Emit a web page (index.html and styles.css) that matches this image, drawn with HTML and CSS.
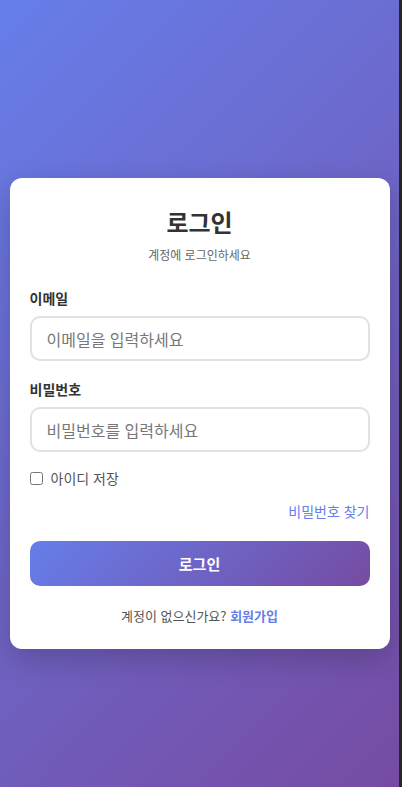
FILE: index.html
```html
<!DOCTYPE html>
<html lang="ko">
<head>
    <meta charset="UTF-8">
    <meta name="viewport" content="width=device-width, initial-scale=1.0">
    <title>로그인</title>
    <link rel="stylesheet" href="styles.css">
</head>
<body>
    <div class="page">
        <div class="login-card">
            <h1 class="login-title">로그인</h1>
            <p class="login-subtitle">계정에 로그인하세요</p>

            <form class="login-form">
                <div class="form-group">
                    <label for="email">이메일</label>
                    <input type="email" id="email" placeholder="이메일을 입력하세요">
                </div>
                <div class="form-group">
                    <label for="password">비밀번호</label>
                    <input type="password" id="password" placeholder="비밀번호를 입력하세요">
                </div>

                <label class="remember">
                    <input type="checkbox" id="remember">
                    <span>아이디 저장</span>
                </label>

                <div class="forgot">
                    <a href="#">비밀번호 찾기</a>
                </div>

                <button type="submit" class="login-btn">로그인</button>
            </form>

            <p class="signup">계정이 없으신가요? <a href="#">회원가입</a></p>
        </div>
    </div>
</body>
</html>
```

FILE: styles.css
```css
* {
    box-sizing: border-box;
}

html {
    background-color: #25262d;
}

body {
    margin: 0;
    font-family: "Noto Sans CJK KR", "Noto Sans", sans-serif;
    color: #333;
}

.page {
    width: calc(100% - 3px);
    height: 100vh;
    padding: 40px 0 0;
    display: flex;
    align-items: center;
    justify-content: center;
    background: linear-gradient(135deg, #667eea 0%, #764ba2 100%);
}

.login-card {
    width: 380px;
    background-color: #fff;
    border-radius: 12px;
    padding: 28px 20px 23px;
    box-shadow: 0 10px 30px rgba(0, 0, 0, 0.2);
}

.login-title {
    margin: 0;
    text-align: center;
    font-size: 24px;
    line-height: 32px;
    font-weight: 700;
    color: #333;
}

.login-subtitle {
    margin: 8px 0 0;
    text-align: center;
    font-size: 12px;
    line-height: 18px;
    color: #666;
}

.login-form {
    margin-top: 24px;
}

.form-group {
    margin-bottom: 18px;
}

.form-group label {
    display: block;
    font-size: 14px;
    line-height: 21px;
    font-weight: 600;
    color: #333;
    margin-bottom: 7px;
}

.form-group input {
    display: block;
    width: 100%;
    height: 45px;
    padding: 0 15px;
    border: 2px solid #e1e1e1;
    border-radius: 10px;
    font-family: inherit;
    font-size: 16px;
    color: #333;
    outline: none;
}

.form-group input::placeholder {
    color: #777;
}

.remember {
    display: flex;
    align-items: center;
    gap: 8px;
    font-size: 14px;
    line-height: 20px;
    color: #555;
    margin-top: -2px;
}

.remember input {
    width: 13px;
    height: 13px;
    margin: 0;
}

.forgot {
    text-align: right;
    margin-top: 14px;
    font-size: 14px;
    line-height: 19px;
}

.forgot a {
    color: #667eea;
    text-decoration: none;
}

.login-btn {
    display: block;
    width: 100%;
    height: 45px;
    margin-top: 20px;
    border: none;
    border-radius: 10px;
    background: linear-gradient(135deg, #667eea 0%, #764ba2 100%);
    color: #fff;
    font-family: inherit;
    font-size: 15px;
    font-weight: 700;
    cursor: pointer;
}

.signup {
    margin: 20px 0 0;
    text-align: center;
    font-size: 13px;
    line-height: 20px;
    color: #555;
}

.signup a {
    color: #667eea;
    font-weight: 700;
    text-decoration: none;
}
```
